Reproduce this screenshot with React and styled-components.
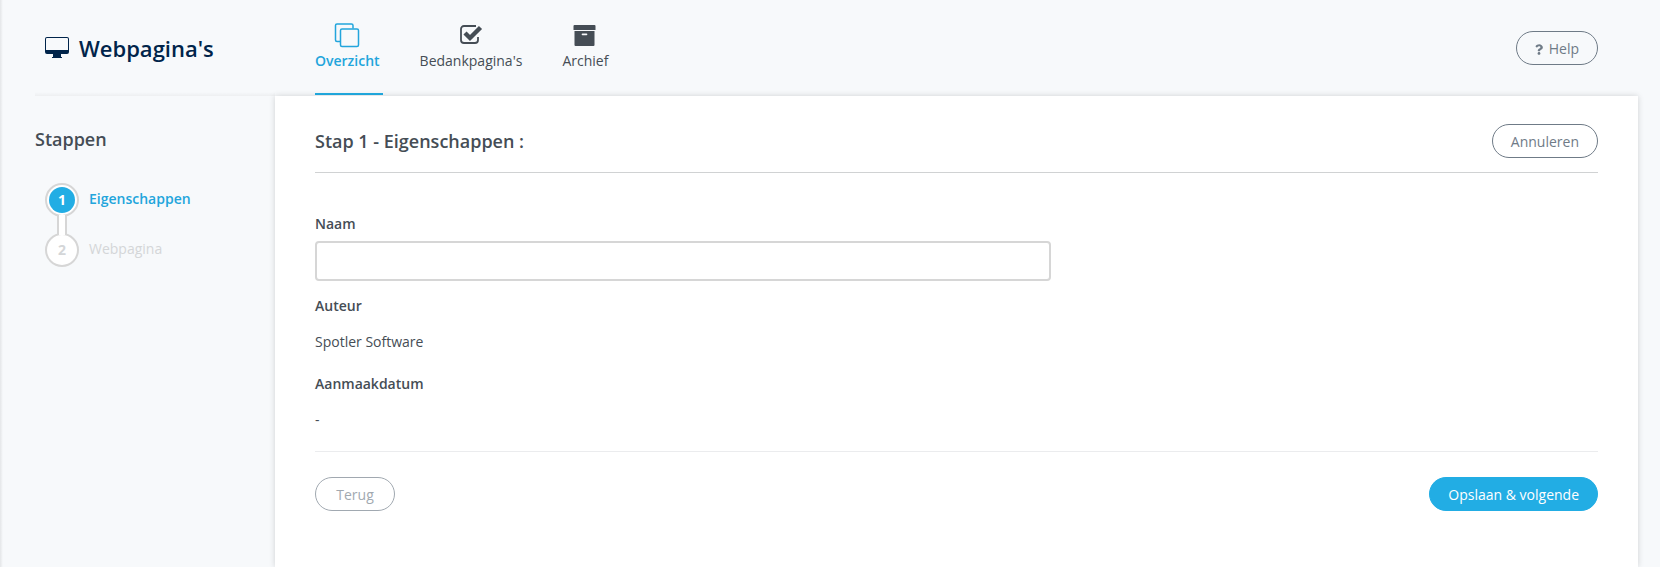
import React, { useState } from "react";
import styled, { createGlobalStyle } from "styled-components";
import { FaQuestion } from "react-icons/fa";

const GlobalStyle = createGlobalStyle`
  * {
    box-sizing: border-box;
  }

  body {
    margin: 0;
    background: #f7f9fb;
    color: #454d55;
    font-family: "Open Sans", "Noto Sans", sans-serif;
    font-size: 14px;
    line-height: 20px;
  }
`;

const Page = styled.div`
  display: grid;
  grid-template-columns: 275px 1fr;
  grid-template-rows: 96px 1fr;
  min-height: 100vh;
  padding-right: 22px;
  overflow: hidden;
  background: linear-gradient(to right, rgba(0, 0, 0, 0.08), transparent) left /
    3px 100% no-repeat;
`;

const PageTitle = styled.h1`
  display: flex;
  align-items: center;
  gap: 10px;
  margin: 0 0 0 35px;
  padding: 0 0 0 10px;
  color: #00244a;
  font-size: 22px;
  line-height: 30px;
  font-weight: 600;
  background: linear-gradient(to top, rgba(0, 0, 0, 0.04), transparent) bottom /
    100% 4px no-repeat;
`;

const Header = styled.header`
  display: flex;
  align-items: center;
  justify-content: space-between;
  padding: 0 40px;
`;

const Tabs = styled.nav`
  display: flex;
  align-self: stretch;
  gap: 37px;
`;

const Tab = styled.a`
  display: flex;
  flex-direction: column;
  align-items: center;
  gap: 3px;
  height: 95px;
  padding: 22px 3px 0 0;
  border-bottom: 2px solid ${(props) => (props.$active ? "#22ade4" : "transparent")};
  color: ${(props) => (props.$active ? "#22a5dc" : "#454d55")};
  font-weight: ${(props) => (props.$active ? 600 : 400)};
  text-decoration: none;
`;

const Button = styled.button`
  display: inline-flex;
  align-items: center;
  justify-content: center;
  gap: 6px;
  height: 34px;
  min-width: 80px;
  padding: 2px 18px 0;
  border: 1px solid ${(props) => (props.$primary ? "#22ade4" : "#6f7b87")};
  border-radius: 17px;
  background: ${(props) => (props.$primary ? "#22ade4" : "transparent")};
  color: ${(props) => (props.$primary ? "#fff" : "#6f7b87")};
  font: inherit;
  cursor: pointer;

  &:disabled {
    opacity: 0.65;
    cursor: default;
  }
`;

const Sidebar = styled.aside`
  padding: 31px 20px 0 35px;
`;

const Heading = styled.h2`
  margin: 0;
  font-size: 18px;
  line-height: 24px;
  font-weight: 600;
`;

const Steps = styled.ol`
  list-style: none;
  margin: 32px 0 0;
  padding: 0 10px;
`;

const Step = styled.li`
  display: flex;
  align-items: center;
  gap: 10px;
  color: ${(props) => (props.$active ? "#22a5dc" : "#d4d6d8")};
  font-weight: ${(props) => (props.$active ? 600 : 400)};
`;

const StepLabel = styled.span`
  padding-bottom: 2px;
`;

const StepCircle = styled.span`
  display: flex;
  width: 34px;
  height: 34px;
  padding: 2px;
  border: 2px solid #d6d6d6;
  border-radius: 50%;
  background: #fff;
`;

const StepNumber = styled.span`
  flex: 1;
  border-radius: 50%;
  background: ${(props) => (props.$active ? "#22ade4" : "#fff")};
  color: ${(props) => (props.$active ? "#fff" : "#d4d6d8")};
  font-weight: 700;
  line-height: 26px;
  text-align: center;
`;

/* overlaps both circles by 2px so their borders open up */
const StepLink = styled.li`
  position: relative;
  width: 10px;
  height: 20px;
  margin: -2px 12px;
  border: solid #d6d6d6;
  border-width: 0 2px;
  background: #fff;
`;

const Panel = styled.main`
  padding: 28px 40px;
  background: #fff;
  box-shadow: 0 0 6px rgba(0, 0, 0, 0.16);
`;

const PanelHeader = styled.div`
  display: flex;
  align-items: center;
  justify-content: space-between;
  padding-bottom: 14px;
  border-bottom: 1px solid #d0d2d3;
`;

const Fields = styled.div`
  display: flex;
  flex-direction: column;
  padding: 41px 0 21px;
`;

const Label = styled.label`
  font-weight: 600;
`;

const TextInput = styled.input`
  width: 100%;
  max-width: 736px;
  height: 40px;
  margin: 7px 0 15px;
  padding: 0 10px;
  border: 2px solid #d6d6d6;
  border-radius: 4px;
  background: #fff;
  color: inherit;
  font: inherit;
`;

const Output = styled.output`
  margin: 16px 0 22px;

  &:last-child {
    margin-bottom: 0;
  }
`;

const Actions = styled.div`
  display: flex;
  justify-content: space-between;
  padding-top: 25px;
  border-top: 1px solid #ebecee;
`;

const MonitorIcon = () => (
  <svg width="24" height="22" viewBox="0 0 24 22" aria-hidden="true">
    <path
      d="M2 0h20a2 2 0 0 1 2 2v13a2 2 0 0 1-2 2h-6v3h1v1H7v-1h1v-3H2a2 2 0 0 1-2-2V2a2 2 0 0 1 2-2zM1 2v11h22V2a1 1 0 0 0-1-1H2a1 1 0 0 0-1 1z"
      fill="currentColor"
    />
  </svg>
);

const CopyIcon = () => (
  <svg
    width="26"
    height="26"
    viewBox="0 0 26 26"
    fill="none"
    stroke="currentColor"
    strokeWidth="1.5"
    aria-hidden="true"
  >
    <path d="M6 19.500H3A1.500 1.500 0 0 1 1.500 18V3.500A1.500 1.500 0 0 1 3 2h14.500A1.500 1.500 0 0 1 19 3.500v3" />
    <rect x="6.500" y="7" width="18" height="17.500" rx="1.500" />
  </svg>
);

const CheckIcon = () => (
  <svg width="24" height="26" viewBox="0 0 24 26" aria-hidden="true">
    <path
      d="M17 4H5a3 3 0 0 0-3 3v11a3 3 0 0 0 3 3h11a3 3 0 0 0 3-3v-3"
      fill="none"
      stroke="currentColor"
      strokeWidth="1.8"
    />
    <path
      d="M6 11l5 5L21.500 5.500"
      fill="none"
      stroke="currentColor"
      strokeWidth="4.4"
    />
  </svg>
);

const ArchiveIcon = () => (
  <svg width="24" height="26" viewBox="0 0 24 26" aria-hidden="true">
    <path
      d="M1.500 3h20a1 1 0 0 1 1 1v4h-22V4a1 1 0 0 1 1-1zM1.500 9h20v14a1 1 0 0 1-1 1h-18a1 1 0 0 1-1-1zM9.500 11.500a.8.8 0 0 0 0 1.700h4a.8.8 0 0 0 0-1.700z"
      fill="currentColor"
      fillRule="evenodd"
    />
  </svg>
);

const tabs = [
  { label: "Overzicht", icon: <CopyIcon />, active: true },
  { label: "Bedankpagina's", icon: <CheckIcon /> },
  { label: "Archief", icon: <ArchiveIcon /> },
];

const App = () => {
  const [naam, setNaam] = useState("");

  return (
    <>
      <GlobalStyle />
      <Page>
        <PageTitle>
          <MonitorIcon />
          Webpagina's
        </PageTitle>

        <Header>
          <Tabs>
            {tabs.map((tab) => (
              <Tab key={tab.label} href="#" $active={tab.active}>
                {tab.icon}
                {tab.label}
              </Tab>
            ))}
          </Tabs>
          <Button type="button">
            <FaQuestion size={11} viewBox="0 0 384 512" style={{ width: 8 }} />
            Help
          </Button>
        </Header>

        <Sidebar>
          <Heading>Stappen</Heading>
          <Steps>
            <Step $active>
              <StepCircle>
                <StepNumber $active>1</StepNumber>
              </StepCircle>
              <StepLabel>Eigenschappen</StepLabel>
            </Step>
            <StepLink aria-hidden="true" />
            <Step>
              <StepCircle>
                <StepNumber>2</StepNumber>
              </StepCircle>
              <StepLabel>Webpagina</StepLabel>
            </Step>
          </Steps>
        </Sidebar>

        <Panel>
          <PanelHeader>
            <Heading>Stap 1 - Eigenschappen :</Heading>
            <Button type="button">Annuleren</Button>
          </PanelHeader>

          <Fields>
            <Label htmlFor="naam">Naam</Label>
            <TextInput
              id="naam"
              type="text"
              value={naam}
              onChange={(e) => setNaam(e.target.value)}
            />
            <Label htmlFor="auteur">Auteur</Label>
            <Output id="auteur">Spotler Software</Output>
            <Label htmlFor="aanmaakdatum">Aanmaakdatum</Label>
            <Output id="aanmaakdatum">-</Output>
          </Fields>

          <Actions>
            <Button type="button" disabled>
              Terug
            </Button>
            <Button type="button" $primary>
              Opslaan & volgende
            </Button>
          </Actions>
        </Panel>
      </Page>
    </>
  );
};

export default App;
